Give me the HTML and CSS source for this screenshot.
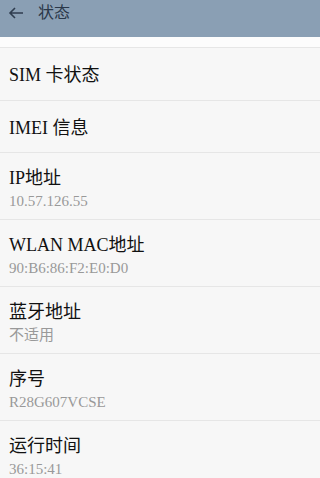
FILE: index.html
```html
<!DOCTYPE html>
<html lang="zh-CN">
<head>
    <meta charset="UTF-8">
    <meta name="viewport" content="width=device-width, initial-scale=1.0">
    <title>状态</title>
    <link rel="stylesheet" href="styles.css">
</head>
<body>
    <div class="header">
        <svg class="back" width="16" height="12" viewBox="0 0 16 12">
            <path d="M15 6H2M7 1L2 6l5 5" fill="none" stroke="#2f3d4f" stroke-width="1.6"/>
        </svg>
        <span class="title">状态</span>
    </div>
    <div class="gap"></div>

    <div class="list">
        <div class="row single first"><div class="name">SIM 卡状态</div></div>
        <div class="row single"><div class="name">IMEI 信息</div></div>
        <div class="row">
            <div class="name">IP地址</div>
            <div class="value">10.57.126.55</div>
        </div>
        <div class="row">
            <div class="name">WLAN MAC地址</div>
            <div class="value">90:B6:86:F2:E0:D0</div>
        </div>
        <div class="row">
            <div class="name">蓝牙地址</div>
            <div class="value">不适用</div>
        </div>
        <div class="row">
            <div class="name">序号</div>
            <div class="value">R28G607VCSE</div>
        </div>
        <div class="row">
            <div class="name">运行时间</div>
            <div class="value">36:15:41</div>
        </div>
    </div>
</body>
</html>
```

FILE: styles.css
```css
body { margin: 0; background: #f7f7f7; font-family: "Liberation Serif", "Noto Sans CJK SC", serif; overflow: hidden; }
.header { height: 37px; background: #8a9fb4; display: flex; align-items: flex-start; padding: 6px 0 0 8px; box-sizing: border-box; }
.back { margin-top: 1px; }
.title { margin-left: 14px; font-size: 16px; line-height: 14px; color: #2a3849; }
.gap { height: 10px; background: #fcfcfc; border-bottom: 1px solid #e6e6e6; }
.row { padding: 13px 9px 8px; border-bottom: 1px solid #e6e6e6; height: 45px; }
.row.single { height: 30px; padding: 12px 9px 9px; display: flex; align-items: center; }
.row.single.first { padding-bottom: 10px; }
.name { font-size: 18px; line-height: 24px; color: #111; }
.value { margin-top: 2px; font-size: 15px; line-height: 19px; color: #999; }
```
